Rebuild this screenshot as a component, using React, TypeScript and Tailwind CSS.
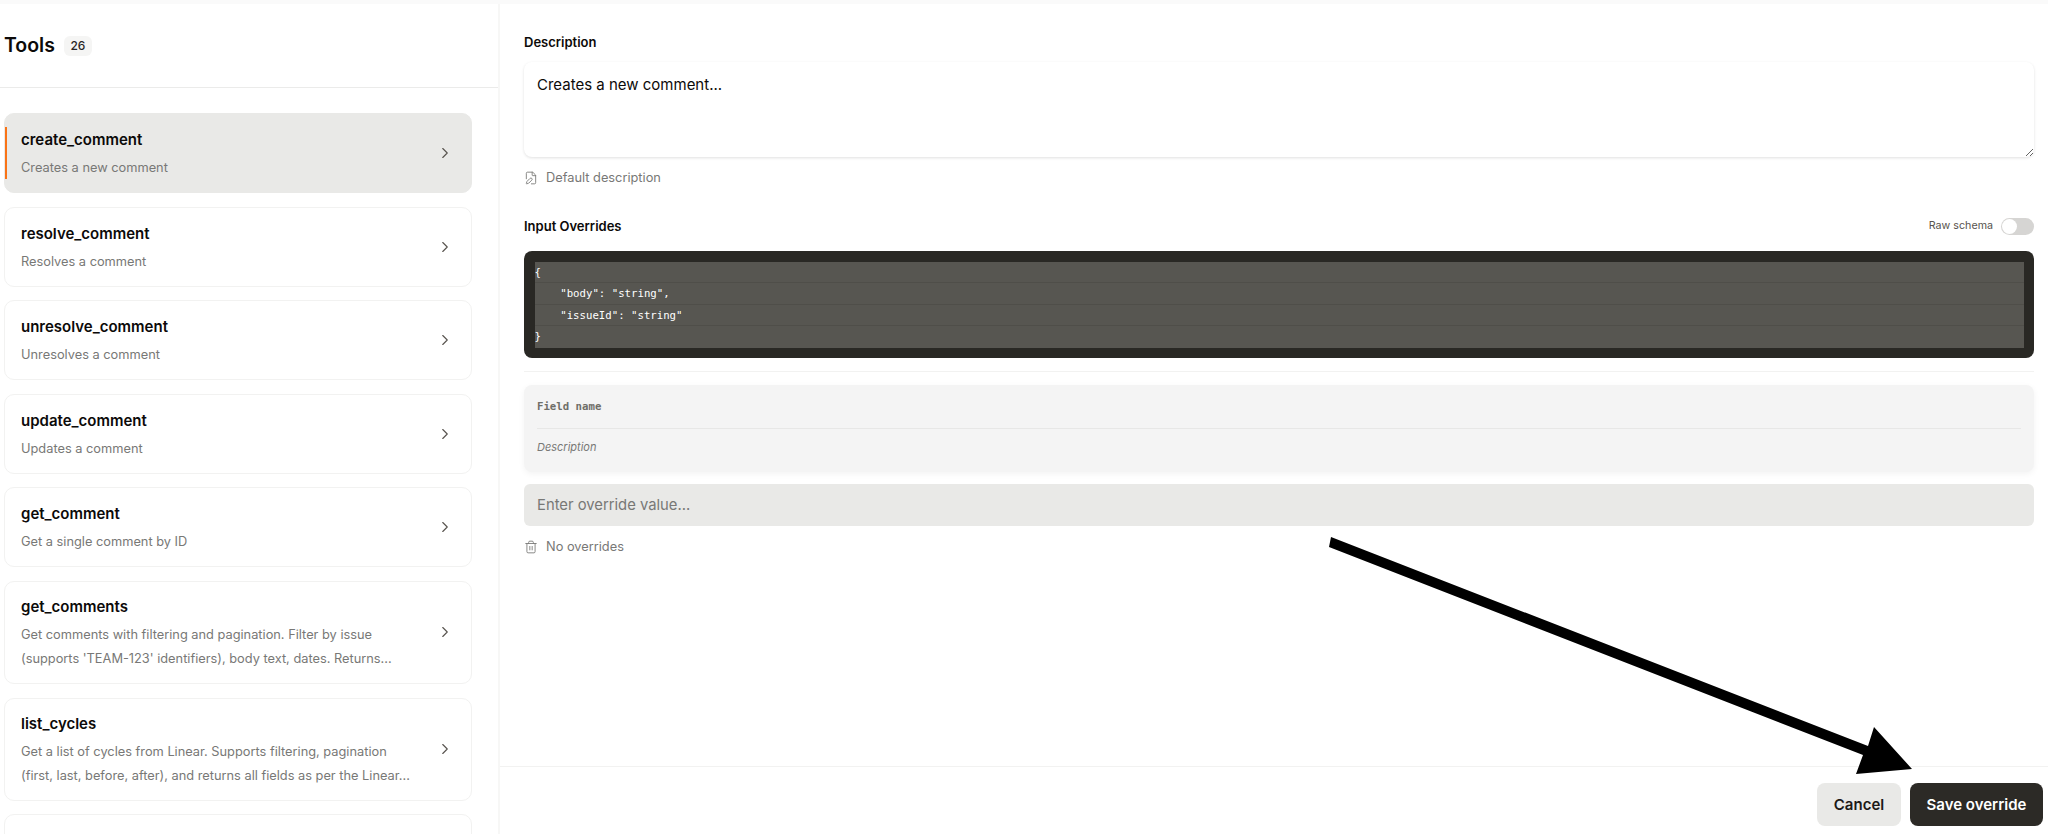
import { ChevronRight, FilePen, Trash2 } from "lucide-react";

const tools = [
  { name: "create_comment", lines: ["Creates a new comment"], active: true },
  { name: "resolve_comment", lines: ["Resolves a comment"] },
  { name: "unresolve_comment", lines: ["Unresolves a comment"] },
  { name: "update_comment", lines: ["Updates a comment"] },
  { name: "get_comment", lines: ["Get a single comment by ID"] },
  {
    name: "get_comments",
    lines: [
      "Get comments with filtering and pagination. Filter by issue",
      "(supports 'TEAM-123' identifiers), body text, dates. Returns...",
    ],
  },
  {
    name: "list_cycles",
    lines: [
      "Get a list of cycles from Linear. Supports filtering, pagination",
      "(first, last, before, after), and returns all fields as per the Linear...",
    ],
  },
];

const schema = ["{", '    "body": "string",', '    "issueId": "string"', "}"];

function ToolCard({ name, lines, active }: { name: string; lines: string[]; active?: boolean }) {
  return (
    <div
      className={`relative flex shrink-0 items-center justify-between rounded-[10px] border pl-[16px] pr-[17px] ${
        active ? "border-[#e9e9e7] bg-[#e9e9e7]" : "border-[#f2f2f1] bg-white"
      } ${lines.length > 1 ? "h-[103px]" : "h-[80px]"}`}
    >
      {active && <div className="absolute bottom-[13px] left-0 top-[13px] w-[2px] bg-[#f97316]" />}
      <div className="min-w-0 pt-[3px]">
        <div className="text-[15px] font-semibold leading-[22px] text-[#0c0a09]">{name}</div>
        <div className="mt-[5px] text-[12.8px] leading-[24px] text-[#787876]">
          {lines.map((line) => (
            <div key={line} className="whitespace-nowrap">
              {line}
            </div>
          ))}
        </div>
      </div>
      <ChevronRight className="h-[18px] w-[18px] shrink-0 text-[#57534e]" strokeWidth={1.5} />
    </div>
  );
}

function Hint({ icon, text }: { icon: React.ReactNode; text: string }) {
  return (
    <div className="flex h-5 items-center gap-[8px] text-[12.8px] text-[#787876]">
      {icon}
      <span>{text}</span>
    </div>
  );
}

export default function App() {
  return (
    <div className="relative flex h-screen w-full flex-col overflow-hidden bg-white font-['Inter',sans-serif]">
      <div className="h-1 shrink-0 bg-[#fafafa]" />
      <div className="flex min-h-0 flex-1">
        <aside className="flex w-[500px] shrink-0 flex-col border-r-2 border-[#f7f7f6]">
          <div className="flex h-[84px] shrink-0 items-center gap-[9px] border-b border-[#ebebea] pl-1">
            <h2 className="text-[19.5px] font-semibold text-[#0c0a09]">Tools</h2>
            <span className="flex h-5 w-7 items-center justify-center rounded-md bg-[#f5f5f4] text-[12px] font-medium text-[#292524]">
              26
            </span>
          </div>
          <div className="flex min-h-0 flex-1 flex-col gap-[13.6px] overflow-hidden pl-1 pr-[26px] pt-[25px]">
            {tools.map((tool) => (
              <ToolCard key={tool.name} {...tool} />
            ))}
            <div className="h-[80px] shrink-0 rounded-[10px] border border-[#f2f2f1]" />
          </div>
        </aside>

        <main className="flex min-w-0 flex-1 flex-col">
          <div className="flex min-h-0 flex-1 flex-col pl-6 pr-[14px] pt-[28px]">
            <label className="text-[13px] font-semibold leading-5 text-[#0c0a09]">Description</label>
            <textarea
              defaultValue="Creates a new comment..."
              className="mt-[10px] h-[95px] w-full shrink-0 rounded-lg bg-white px-[13px] pb-[10px] pt-[11px] text-[15px] leading-[24px] text-[#0c0a09] shadow-[0_1px_3px_rgba(0,0,0,0.12)] outline-none"
            />
            <div className="mt-[10px] pt-px">
              <Hint icon={<FilePen className="h-[14px] w-[14px]" strokeWidth={1.5} />} text="Default description" />
            </div>

            <div className="mt-[30px] flex h-[17px] items-center justify-between">
              <label className="text-[13px] font-semibold text-[#0c0a09]">Input Overrides</label>
              <div className="flex items-center gap-[8px]">
                <span className="text-[10.7px] text-[#57534e]">Raw schema</span>
                <button className="flex h-[17px] w-[33px] items-center rounded-full bg-[#d6d5d3] pl-px">
                  <span className="h-[15px] w-[15px] rounded-full bg-white" />
                </button>
              </div>
            </div>

            <div className="mt-[16px] rounded-lg bg-[#292824] p-[10.5px]">
              <pre className="bg-[#575651] font-['DejaVu_Sans_Mono',monospace] text-[10.7px] font-medium leading-[21.3px] text-white">
                {schema.map((line, i) => (
                  <div key={i} className={i < 3 ? "h-[21.5px] border-b border-[#4f4e49]" : "h-[21.5px]"}>
                    {line}
                  </div>
                ))}
              </pre>
            </div>

            <div className="mt-[13px] h-px bg-[#f2f2f1]" />

            <div className="mt-[13px] flex h-[87px] flex-col rounded-lg bg-[#f4f4f4] px-[13px] shadow-[0_2px_6px_rgba(0,0,0,0.05)]">
              <div className="flex h-[44px] shrink-0 items-center border-b border-[#e7e7e6] pt-[2px] font-['DejaVu_Sans_Mono',monospace] text-[10.7px] font-bold text-[#6f6e68]">
                Field name
              </div>
              <div className="flex flex-1 items-center pb-[7px] text-[11px] italic text-[#787876]">Description</div>
            </div>

            <input
              placeholder="Enter override value..."
              className="mt-[12px] h-[42px] w-full shrink-0 rounded-md bg-[#e9e9e7] px-[13px] text-[14.8px] outline-none placeholder:text-[#787876]"
            />
            <div className="mt-[11px]">
              <Hint icon={<Trash2 className="h-[14px] w-[14px]" strokeWidth={1.5} />} text="No overrides" />
            </div>
          </div>

          <div className="flex h-[68px] shrink-0 items-start justify-end gap-[9px] border-t border-[#f2f2f1] pr-[5px] pt-[16px]">
            <button className="h-[43px] w-[84px] rounded-lg bg-[#e9e9e7] pt-px text-[15px] font-semibold text-[#1c1917]">
              Cancel
            </button>
            <button className="h-[43px] w-[133px] rounded-lg bg-[#2c2a26] pt-px text-[15px] font-semibold text-white">
              Save override
            </button>
          </div>
        </main>
      </div>

      {/* annotation arrow drawn over the screenshot */}
      <svg className="pointer-events-none absolute left-0 top-0 h-[834px] w-[2048px]" viewBox="0 0 2048 834">
        <polygon points="1331,537 1868,746 1874,727 1912,769 1856,774 1863,755 1329,547" fill="#000" />
      </svg>
    </div>
  );
}
